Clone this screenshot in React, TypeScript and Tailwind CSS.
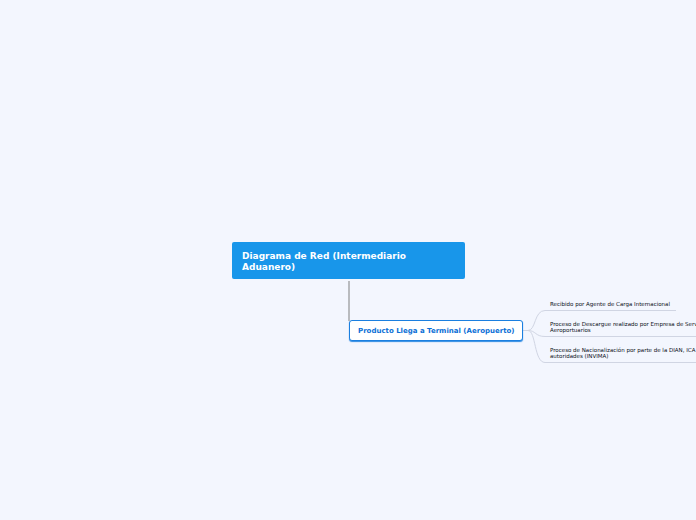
const font = "font-['DejaVu_Sans',Verdana,sans-serif]"

const leaves = [
  { top: 'top-[301px]', lines: ['Recibido por Agente de Carga Internacional'] },
  { top: 'top-[321px]', lines: ['Proceso de Descargue realizado por Empresa de Servicios', 'Aeroportuarios'] },
  { top: 'top-[347px]', lines: ['Proceso de Nacionalización por parte de la DIAN, ICA y otras', 'autoridades (INVIMA)'] },
]

export default function App() {
  return (
    <div className={`relative h-[520px] w-[696px] overflow-hidden bg-[#f3f6fe] ${font}`}>
      {/* Connectors */}
      <svg className="absolute left-0 top-0" width="696" height="520" fill="none">
        <path d="M349 281V321" stroke="#b9bbbf" strokeWidth="2" />
        <path d="M523 330.5H528C536 330.5 534 310.5 545 310.5H676" stroke="#d0d5e3" />
        <path d="M523 330.5H528C536 330.5 535 336.5 545 336.5H696" stroke="#d0d5e3" />
        <path d="M523 330.5H528C536 330.5 534 362.5 545 362.5H696" stroke="#d0d5e3" />
      </svg>

      {/* Root node */}
      <div className="absolute left-[232px] top-[242px] flex h-[37px] w-[233px] items-center rounded-[2px] bg-[#1896ea] px-[10px] pt-[2px]">
        <div className="text-[9px] font-bold leading-[11px] text-white">
          Diagrama de Red (Intermediario
          <br />
          Aduanero)
        </div>
      </div>

      {/* Main topic */}
      <div className="absolute left-[349px] top-[320px] flex h-[21px] w-[174px] items-center rounded-[3px] border border-[#1a7fe0] bg-white pl-[8px] pt-[1px] shadow-[0_1px_1px_rgba(26,127,224,0.9)]">
        <span className="whitespace-nowrap text-[7px] font-bold text-[#0b6fd6]">Producto Llega a Terminal (Aeropuerto)</span>
      </div>

      {/* Leaf topics */}
      {leaves.map(leaf => (
        <div key={leaf.lines[0]} className={`absolute left-[550px] ${leaf.top} whitespace-nowrap text-[5.5px] leading-[6px] text-[#0c1018]`}>
          {leaf.lines.map(line => (
            <div key={line}>{line}</div>
          ))}
        </div>
      ))}
    </div>
  )
}
